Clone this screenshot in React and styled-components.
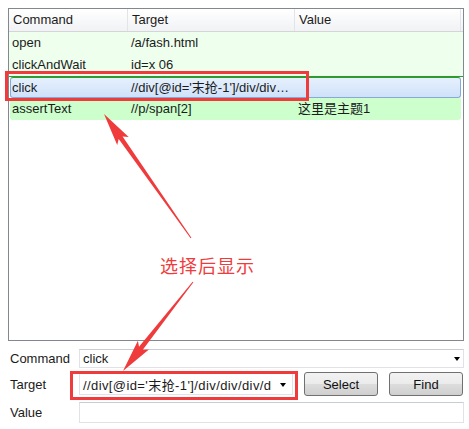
import React from 'react'
import styled, { createGlobalStyle } from 'styled-components'

const GlobalStyle = createGlobalStyle`
  html, body {
    margin: 0;
    padding: 0;
    background: #fff;
  }
  body {
    font-family: "Liberation Sans", "Noto Sans CJK SC", sans-serif;
    font-size: 13px;
    color: #1b1b1b;
  }
`

const RED = '#ef3b3b'

const steps = [
  { command: 'open', target: '/a/fash.html', value: '', tone: 'light' },
  { command: 'clickAndWait', target: 'id=x 06', value: '', tone: 'light' },
  { command: 'click', target: "//div[@id='末抢-1']/div/div/div/div", value: '', tone: 'selected' },
  { command: 'assertText', target: '//p/span[2]', value: '这里是主题1', tone: 'strong' },
]

// arrow drawn from tail (x1, y1) to tip (x2, y2)
const arrowPoints = (x1, y1, x2, y2) => {
  const dx = x2 - x1
  const dy = y2 - y1
  const len = Math.hypot(dx, dy)
  const ux = dx / len
  const uy = dy / len
  const px = -uy
  const py = ux
  const at = (d, w) => `${(x1 + ux * d + px * w).toFixed(1)},${(y1 + uy * d + py * w).toFixed(1)}`
  const neck = len - 29
  return [
    at(0, 0.5),
    at(neck, 2.4),
    at(neck - 4, 7),
    at(len, 0),
    at(neck - 4, -7),
    at(neck, -2.4),
    at(0, -0.5),
  ].join(' ')
}

const App = () => {
  return (
    <>
      <GlobalStyle />
      <Page>
        <Panel>
          <Header>
            <HeadCell>Command</HeadCell>
            <HeadCell>Target</HeadCell>
            <HeadCell>Value</HeadCell>
            <HeadCell />
          </Header>
          {steps.map(step => (
            <Row key={step.command} tone={step.tone}>
              <Cell>{step.command}</Cell>
              <Cell>{step.target}</Cell>
              <Cell>{step.value}</Cell>
            </Row>
          ))}
        </Panel>

        <Form>
          <FormRow top={8} height={19}>
            <Label>Command</Label>
            <Combo>
              <ComboText>click</ComboText>
              <Caret right={3} />
            </Combo>
          </FormRow>
          <FormRow top={3} height={26}>
            <Label>Target</Label>
            <Combo tall>
              <ComboText wide>//div[@id='末抢-1']/div/div/div/div</ComboText>
              <Caret right={6} />
            </Combo>
            <Button>Select</Button>
            <Button>Find</Button>
          </FormRow>
          <FormRow top={5} height={21}>
            <Label>Value</Label>
            <TextBox />
          </FormRow>
        </Form>

        <Frame style={{ left: 5, top: 71, width: 304, height: 30 }} />
        <Frame style={{ left: 70, top: 371, width: 228, height: 29 }} />
        <Note>选择后显示</Note>
        <Arrows viewBox="0 0 469 429">
          <polygon points={arrowPoints(191, 238, 104, 114)} fill={RED} />
          <polygon points={arrowPoints(193, 282, 123, 371)} fill={RED} />
        </Arrows>
      </Page>
    </>
  )
}

export default App

const Page = styled.div`
  position: relative;
  width: 469px;
  height: 429px;
  box-sizing: border-box;
  padding: 8px 5px 0 8px;
  overflow: hidden;
`

const Panel = styled.div`
  height: 333px;
  box-sizing: border-box;
  border: 1px solid #828790;
  background: #fff;
`

const Header = styled.div`
  display: grid;
  grid-template-columns: 119px 167px 166px 1fr;
  height: 23px;
  box-sizing: border-box;
  border-bottom: 1px solid #d5d5d5;
  background: linear-gradient(#ffffff, #f1f2f5);
`

const HeadCell = styled.div`
  padding-left: 4px;
  line-height: 22px;
  border-right: 1px solid #e3e4e8;
  white-space: nowrap;

  &:last-child {
    border-right: none;
  }
`

const tones = {
  light: 'background: #eeffee;',
  strong: `
    background: #ccffcc;
    left: 1px;
    right: 2px;
    border-radius: 0 0 3px 3px;
  `,
  selected: `
    background: linear-gradient(#e6f0fd, #cfe2fa);
    border: 1px solid #86aad8;
    border-top-color: #2f9a2f;
    border-radius: 3px;
    left: 1px;
    right: 2px;
  `,
}

const Row = styled.div`
  position: relative;
  display: grid;
  grid-template-columns: 119px 167px 1fr;
  height: 22px;
  box-sizing: border-box;
  border-top: ${props => props.tone === 'selected' ? '1px solid #2f9a2f' : 'none'};

  &::before {
    content: '';
    position: absolute;
    top: 0;
    bottom: 0;
    left: 0;
    right: 0;
    ${props => tones[props.tone]}
  }
`

const Cell = styled.div`
  position: relative;
  padding: 0 3px;
  line-height: 21px;
  white-space: nowrap;
  overflow: hidden;
  text-overflow: ellipsis;
`

const Form = styled.div`
  display: flex;
  flex-direction: column;
`

const FormRow = styled.div`
  display: flex;
  align-items: center;
  margin-top: ${props => props.top}px;
  height: ${props => props.height}px;
`

const Label = styled.div`
  width: 71px;
  flex-shrink: 0;
  padding-left: 2px;
  box-sizing: border-box;
`

const Combo = styled.div`
  flex: 1;
  min-width: 0;
  display: flex;
  align-items: center;
  height: ${props => props.tall ? 22 : 19}px;
  box-sizing: border-box;
  border: 1px solid #e0e2e8;
  border-top-color: #c9ccd3;
  background: #fff;
`

const ComboText = styled.div`
  flex: 1;
  min-width: 0;
  padding-left: 3px;
  letter-spacing: ${props => props.wide ? '0.4px' : 'normal'};
  white-space: nowrap;
  overflow: hidden;
`

const Caret = styled.span`
  flex-shrink: 0;
  width: 0;
  height: 0;
  margin: 1px ${props => props.right}px 0 8px;
  border-left: 3.5px solid transparent;
  border-right: 3.5px solid transparent;
  border-top: 4px solid #000;
`

const Button = styled.button`
  flex-shrink: 0;
  width: 74px;
  height: 24px;
  margin-left: 11px;
  padding: 1px 0 0;
  border: 1px solid #707070;
  border-radius: 3px;
  background: linear-gradient(#f2f2f2 0%, #ebebeb 50%, #dddddd 51%, #cfcfcf 100%);
  font-family: "Liberation Sans", "Noto Sans CJK SC", sans-serif;
  font-size: 13px;
  color: #111;

  &:last-child {
    margin-right: 1px;
  }
`

const TextBox = styled.div`
  flex: 1;
  height: 21px;
  box-sizing: border-box;
  border: 1px solid #e0e2e8;
  border-top-color: #c9ccd3;
  background: #fff;
`

const Frame = styled.div`
  position: absolute;
  box-sizing: border-box;
  border: 3px solid ${RED};
  pointer-events: none;
`

const Note = styled.div`
  position: absolute;
  left: 160px;
  top: 256px;
  font-family: "Noto Sans CJK SC", sans-serif;
  font-size: 18px;
  line-height: 18px;
  letter-spacing: 1px;
  color: ${RED};
  white-space: nowrap;
`

const Arrows = styled.svg`
  position: absolute;
  left: 0;
  top: 0;
  width: 469px;
  height: 429px;
  pointer-events: none;
`
